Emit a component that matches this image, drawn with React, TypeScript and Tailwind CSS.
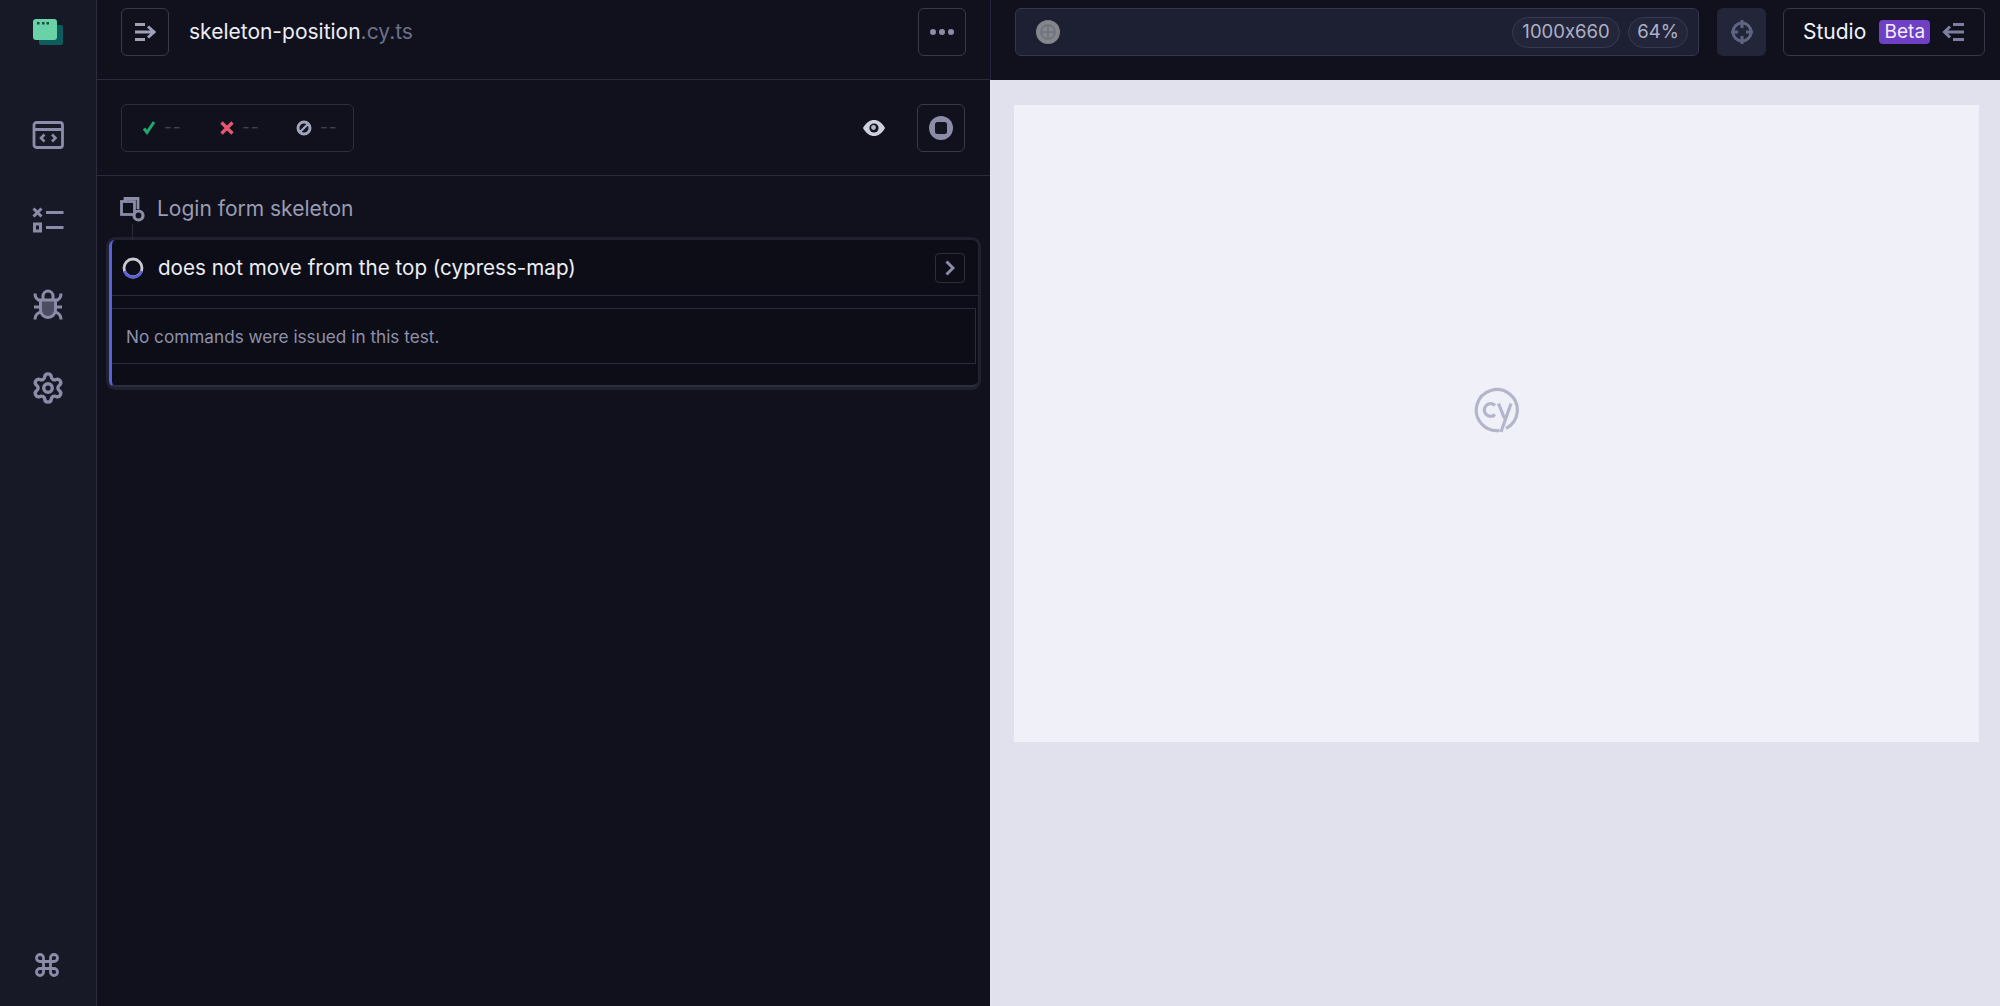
import React from "react";
import { Settings, Command } from "lucide-react";

const G = "#8b8da8";

function Logo() {
  return (
    <svg width="32" height="28" viewBox="0 0 32 28">
      <rect x="6" y="6" width="24" height="20" rx="2" fill="#0e5c5e" />
      <rect x="0" y="0" width="24" height="21" rx="3" fill="#69d3a7" />
      <rect x="4" y="3" width="2.5" height="2.5" fill="#1d4a44" />
      <rect x="9" y="3" width="2.5" height="2.5" fill="#1d4a44" />
      <rect x="13.5" y="3" width="2.5" height="2.5" fill="#1d4a44" />
    </svg>
  );
}
function SpecsIcon() {
  return (
    <svg width="32" height="28" viewBox="0 0 32 28" fill="none">
      <rect x="2" y="1.5" width="28.5" height="25" rx="2.5" stroke={G} strokeWidth="2.8" />
      <path d="M2 8.500h28.500" stroke={G} strokeWidth="3" />
      <path d="M12.500 13.500l-3.500 3.500 3.500 3.500M20 13.500l3.500 3.500-3.500 3.500" stroke={G} strokeWidth="2.600" />
    </svg>
  );
}
function ListIcon() {
  return (
    <svg width="32" height="26" viewBox="0 0 32 26" fill="none">
      <path d="M1.500 1.500l8 8M9.500 1.500l-8 8" stroke={G} strokeWidth="3" />
      <path d="M14 5.500h17.500M14 20.500h17.500" stroke={G} strokeWidth="3" />
      <rect x="2.500" y="17" width="6" height="7" stroke={G} strokeWidth="3" />
    </svg>
  );
}
function BugIcon() {
  return (
    <svg width="30" height="32" viewBox="0 0 30 32" fill="none" stroke={G} strokeWidth="3">
      <path d="M10 10V7a5 5 0 0 1 10 0v3" />
      <path d="M7.500 11h15v10a7.500 7.500 0 0 1-15 0z" fill={G} fillOpacity="0.45" />
      <path d="M2 4.500c0 4 2 6.500 6 7.500M28 4.500c0 4-2 6.500-6 7.500M1 18h6.500M29 18h-6.500M2 30.500c0-4 2-6.500 6-7.500M28 30.500c0-4-2-6.500-6-7.500" />
    </svg>
  );
}
function RunnerIcon() {
  return (
    <svg width="22" height="20" viewBox="0 0 22 20" fill="none" stroke="#9fa1b8" strokeWidth="3">
      <path d="M1 2.500h10M1 10h18M1 17.500h10M14 4.500l6 5.500-6 5.500" />
    </svg>
  );
}
function SuiteIcon() {
  return (
    <svg width="25" height="25" viewBox="0 0 25 25" fill="none" stroke={G} strokeWidth="2.800">
      <path d="M5 4V1.500h13V12" />
      <rect x="1.500" y="4.500" width="13" height="13" />
      <circle cx="18.500" cy="18.500" r="4.500" fill="#10111d" strokeWidth="3.200" />
    </svg>
  );
}
function Check() {
  return (
    <svg width="14" height="14" viewBox="0 0 14 14" fill="none">
      <path d="M2 7.500l3 4L12 1" stroke="#1fa971" strokeWidth="3" />
    </svg>
  );
}
function Cross() {
  return (
    <svg width="14" height="14" viewBox="0 0 14 14" fill="none">
      <path d="M1.500 1.500l11 11M12.500 1.500l-11 11" stroke="#e45770" strokeWidth="3.400" />
    </svg>
  );
}
function Skip() {
  return (
    <svg width="16" height="16" viewBox="0 0 16 16" fill="none">
      <circle cx="8" cy="8" r="6" stroke="#a2a4bc" strokeWidth="3" />
      <path d="M4 12l8-8" stroke="#a2a4bc" strokeWidth="2.400" />
    </svg>
  );
}
function Eye() {
  return (
    <svg width="22" height="16" viewBox="0 0 22 16">
      <path d="M0 8C3 2.500 7 0 11 0s8 2.500 11 8c-3 5.500-7 8-11 8S3 13.500 0 8z" fill="#cfd0de" />
      <circle cx="11" cy="8" r="4.600" fill="#14151f" />
      <circle cx="10.500" cy="7.500" r="2.400" fill="#b5b6c8" />
    </svg>
  );
}
function Stop() {
  return (
    <svg width="24" height="24" viewBox="0 0 24 24">
      <circle cx="12" cy="12" r="12" fill={G} />
      <rect x="6" y="6" width="12" height="12" rx="2.500" fill="#14151f" />
    </svg>
  );
}
function Spinner() {
  return (
    <svg width="22" height="22" viewBox="0 0 22 22" fill="none">
      <circle cx="11" cy="11" r="9" stroke="#c9cad6" strokeWidth="2.800" />
      <path d="M2.500 14a9 9 0 0 0 17 0" stroke="#5a60d8" strokeWidth="2.800" />
    </svg>
  );
}
function Chevron() {
  return (
    <svg width="10" height="16" viewBox="0 0 10 16" fill="none">
      <path d="M1.500 1.500L8 8l-6.500 6.500" stroke={G} strokeWidth="3" />
    </svg>
  );
}
function Globe() {
  return (
    <svg width="24" height="24" viewBox="0 0 24 24">
      <circle cx="12" cy="12" r="12" fill="#84868c" />
      <circle cx="12" cy="12" r="7" fill="none" stroke="#6d7180" strokeWidth="1.500" />
      <path d="M5 12h14M12 5v14" stroke="#6d7180" strokeWidth="1.500" />
    </svg>
  );
}
function Crosshair() {
  return (
    <svg width="24" height="28" viewBox="0 0 24 28" fill="none" stroke="#5f6480">
      <circle cx="12" cy="14" r="9" strokeWidth="3" />
      <path d="M12 2v8M12 18v8M1 14h7M16 14h7" strokeWidth="3" />
    </svg>
  );
}
function StudioIcon() {
  return (
    <svg width="22" height="20" viewBox="0 0 22 20" fill="none" stroke="#7d7fa0" strokeWidth="3">
      <path d="M11 2.500h11M3 10h19M11 17.500h11M8 4.500L2.500 10 8 15.500" />
    </svg>
  );
}
function CyLogo() {
  return (
    <svg width="48" height="48" viewBox="0 0 48 48" fill="none" stroke="#b3b6ca" strokeWidth="3.200">
      <path d="M26.500 44.400A20.500 20.500 0 1 1 33 42.400" />
      <path d="M22 19.500a6.300 6.300 0 1 0 0 9" />
      <path d="M25.500 17.500l6 15M38 17.500L28 46" />
    </svg>
  );
}

function Dash() {
  return <span className="text-[17px] leading-none tracking-[1px] text-[#3f4155]">--</span>;
}

export default function App() {
  return (
    <div className="flex h-[1006px] w-[2000px] overflow-hidden font-['Inter',sans-serif]">
      <aside className="flex w-[97px] shrink-0 flex-col border-r border-[#2a2c3d] bg-[#181926]">
        <div className="flex h-[80px] justify-center pt-[19px]">
          <div className="pl-[2px]"><Logo /></div>
        </div>
        <nav className="flex flex-1 flex-col pt-[12px]">
          <div className="flex h-[85px] items-center justify-center"><SpecsIcon /></div>
          <div className="flex h-[85px] items-center justify-center"><ListIcon /></div>
          <div className="flex h-[85px] items-center justify-center"><BugIcon /></div>
          <div className="flex h-[85px] items-center justify-center pb-[3px]"><Settings size={34} color={G} strokeWidth={2.4} /></div>
        </nav>
        <div className="flex h-[82px] items-center justify-center pr-[2px]"><Command size={28} color={G} strokeWidth={2.4} /></div>
      </aside>

      <main className="flex w-[893px] shrink-0 flex-col bg-[#10111d]">
        <header className="flex h-[80px] items-start justify-between border-b border-[#2a2c3d] pt-[8px] pl-[24px] pr-[24px]">
          <div className="flex h-[48px] items-center gap-[20px]">
            <div className="flex h-[48px] w-[48px] items-center justify-center rounded-[6px] border border-[#383a4c]"><RunnerIcon /></div>
            <div className="text-[21px] leading-[24px] text-[#eceef5]">skeleton-position<span className="text-[#6d6f87]">.cy.ts</span></div>
          </div>
          <div className="flex h-[48px] w-[48px] items-center justify-center gap-[3px] rounded-[6px] border border-[#383a4c]">
            <span className="h-[6px] w-[6px] rounded-full bg-[#8b8da8]" />
            <span className="h-[6px] w-[6px] rounded-full bg-[#8b8da8]" />
            <span className="h-[6px] w-[6px] rounded-full bg-[#8b8da8]" />
          </div>
        </header>

        <div className="flex h-[96px] items-center justify-between border-b border-[#2a2c3d] pl-[24px] pr-[25px]">
          <div className="flex h-[48px] w-[233px] items-center rounded-[6px] border border-[#2c2e3e] pl-[20px]">
            <div className="flex w-[78px] items-center gap-[8px]"><Check /><Dash /></div>
            <div className="flex w-[76px] items-center gap-[8px]"><Cross /><Dash /></div>
            <div className="flex items-center gap-[8px]"><Skip /><Dash /></div>
          </div>
          <div className="flex items-center gap-[32px]">
            <Eye />
            <div className="flex h-[48px] w-[48px] items-center justify-center rounded-[6px] border border-[#383a4c]"><Stop /></div>
          </div>
        </div>

        <div className="flex flex-col pl-[12px] pr-[12px]">
          <div className="relative flex h-[64px] items-center gap-[12px] pl-[11px] pt-[2px]">
            <SuiteIcon />
            <div className="text-[21px] leading-[24px] text-[#9a9cb3]">Login form skeleton</div>
            <div className="absolute bottom-0 left-[23px] h-[16px] w-px bg-[#2a2c3d]" />
          </div>
          <div className="h-[147px] rounded-[6px] border-l-[3px] border-b-[2px] border-l-[#5a60d8] border-b-[#2a3040] bg-[#0c0d17] shadow-[0_0_0_3px_#1f2130]">
            <div className="flex h-[56px] items-center justify-between border-b border-[#2a2c3d] pl-[10px] pr-[13px]">
              <div className="flex items-center gap-[14px]">
                <Spinner />
                <div className="text-[20.600px] leading-[24px] text-[#eceef5]">does not move from the top (cypress-map)</div>
              </div>
              <div className="flex h-[30px] w-[30px] items-center justify-center rounded-[4px] border border-[#2c2e3e]"><Chevron /></div>
            </div>
            <div className="mt-[12px] mr-[2px] flex h-[56px] items-center border-y border-r border-[#2a2c3d] pt-[2px] pl-[14px]">
              <div className="text-[17.200px] leading-[24px] text-[#8f91ab]">No commands were issued in this test.</div>
            </div>
          </div>
        </div>
      </main>

      <section className="flex flex-1 flex-col">
        <header className="flex h-[80px] items-start border-l border-[#23253a] bg-[#10111d] pt-[8px] pl-[24px]">
          <div className="flex h-[48px] w-[684px] items-center justify-between rounded-[6px] border border-[#34374a] bg-[#1d2033] pl-[20px] pr-[10px]">
            <Globe />
            <div className="flex items-center gap-[8px] [font-variant-ligatures:none] [font-feature-settings:'calt'_0]">
              <div className="flex h-[31px] w-[108px] items-center justify-center rounded-full border border-[#383b50] bg-[#23263a] text-[18.500px] text-[#aeb0c6]">1000x660</div>
              <div className="flex h-[31px] w-[60px] items-center justify-center rounded-full border border-[#383b50] bg-[#23263a] text-[18.500px] text-[#aeb0c6]">64%</div>
            </div>
          </div>
          <div className="ml-[18px] flex h-[48px] w-[49px] items-center justify-center rounded-[6px] bg-[#232639]"><Crosshair /></div>
          <div className="ml-[17px] flex h-[48px] w-[202px] items-center rounded-[6px] border border-[#36384a] pl-[19px]">
            <span className="text-[21px] leading-[24px] text-[#f2f3f8]">Studio</span>
            <span className="ml-[13px] flex h-[24px] w-[51px] items-center justify-center rounded-[4px] bg-[#6f3fc4] text-[19px] leading-[24px] text-[#f3eefc]">Beta</span>
            <span className="ml-[12px] flex"><StudioIcon /></span>
          </div>
        </header>
        <div className="flex-1 bg-[#e1e1ed] pt-[25px] pl-[24px] pr-[21px]">
          <div className="flex h-[637px] items-center justify-center bg-[#eff0f8] pb-[28px]">
            <CyLogo />
          </div>
        </div>
      </section>
    </div>
  );
}
